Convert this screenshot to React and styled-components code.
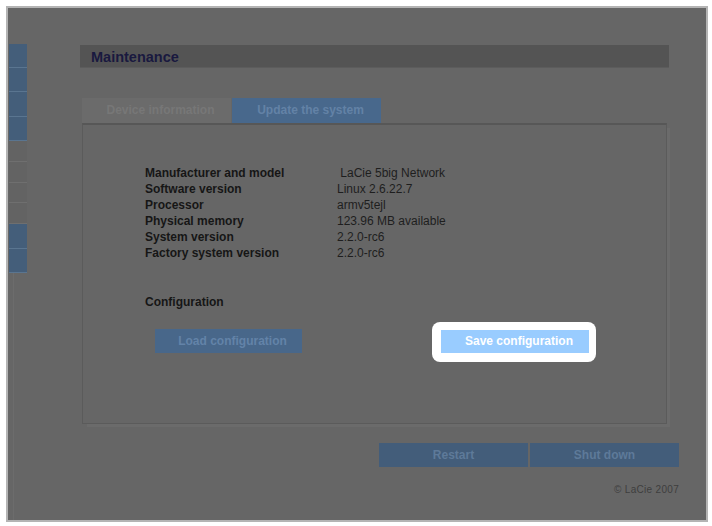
import React from 'react';
import styled, { createGlobalStyle } from 'styled-components';

const GlobalStyle = createGlobalStyle`
  body {
    margin: 0;
    background: #ffffff;
    font-family: "Liberation Sans", Arial, sans-serif;
  }
`;

const navItems = [
  { tone: 'blue', h: 24 },
  { tone: 'blue', h: 24 },
  { tone: 'blue', h: 25 },
  { tone: 'blue', h: 24 },
  { tone: 'grey', h: 21 },
  { tone: 'grey', h: 21 },
  { tone: 'grey', h: 20 },
  { tone: 'grey', h: 21 },
  { tone: 'blue', h: 25 },
  { tone: 'blue', h: 24 },
];

const info = [
  ['Manufacturer and model', '\u00a0LaCie 5big Network'],
  ['Software version', 'Linux 2.6.22.7'],
  ['Processor', 'armv5tejl'],
  ['Physical memory', '123.96 MB available'],
  ['System version', '2.2.0-rc6'],
  ['Factory system version', '2.2.0-rc6'],
];

const App = () => {
  return (
    <>
      <GlobalStyle />
      <Frame>
        <SideNav>
          {navItems.map((item, i) => (
            <NavItem key={i} $tone={item.tone} $h={item.h} />
          ))}
          <NavRail />
        </SideNav>

        <Main>
          <Header>Maintenance</Header>

          <Tabs>
            <Tab>Device information</Tab>
            <Tab $active>Update the system</Tab>
          </Tabs>

          <Panel>
            <InfoGrid>
              {info.map(([label, value]) => (
                <React.Fragment key={label}>
                  <Label>{label}</Label>
                  <Value>{value}</Value>
                </React.Fragment>
              ))}
            </InfoGrid>

            <SectionTitle>Configuration</SectionTitle>

            <ConfigRow>
              <LoadButton>Load configuration</LoadButton>
              <Spotlight>
                <SaveButton>Save configuration</SaveButton>
              </Spotlight>
            </ConfigRow>
          </Panel>

          <ActionRow>
            <ActionButton>Restart</ActionButton>
            <ActionButton>Shut down</ActionButton>
          </ActionRow>

          <Copyright>© LaCie 2007</Copyright>
        </Main>
      </Frame>
    </>
  );
};

const Frame = styled.div`
  margin: 6px;
  width: 702px;
  height: 516px;
  box-sizing: border-box;
  border: 2px solid #b4b4b4;
  background: #666666;
  display: flex;
  overflow: hidden;
`;

const SideNav = styled.div`
  width: 18px;
  margin-left: 1px;
  padding-top: 36px;
  display: flex;
  flex-direction: column;
`;

const NavItem = styled.div`
  height: ${(p) => p.$h - 1}px;
  border-bottom: 1px solid ${(p) => (p.$tone === 'blue' ? '#5a7590' : '#6f6f6f')};
  background: ${(p) => (p.$tone === 'blue' ? '#445e7a' : '#636363')};
`;

const NavRail = styled.div`
  flex: 1;
  margin-left: 4px;
  border-left: 1px solid #6c6c6c;
`;

const Main = styled.div`
  width: 599px;
  margin-left: 53px;
  padding-top: 37px;
  display: flex;
  flex-direction: column;
`;

const Header = styled.div`
  width: 589px;
  height: 23px;
  box-sizing: border-box;
  padding-left: 11px;
  background: #545454;
  border-bottom: 1px solid #5c5c5c;
  color: #19193f;
  font-size: 14.5px;
  font-weight: bold;
  line-height: 24px;
`;

const Tabs = styled.div`
  display: flex;
  gap: 1px;
  margin-top: 30px;
  margin-left: 2px;
`;

const Tab = styled.div`
  width: 149px;
  height: 25px;
  box-sizing: border-box;
  padding-left: 8px;
  text-align: center;
  line-height: 25px;
  font-size: 12px;
  font-weight: bold;
  background: ${(p) => (p.$active ? '#48688c' : '#6b6b6b')};
  color: ${(p) => (p.$active ? '#6382a6' : '#777777')};
`;

const Panel = styled.div`
  width: 585px;
  height: 301px;
  margin-left: 2px;
  box-sizing: border-box;
  border: 1px solid #5b5b5b;
  border-top: 2px solid #575757;
  padding: 40px 0 0 62px;
  box-shadow: 4px 4px 0 -1px #6b6b6b;
`;

const InfoGrid = styled.div`
  display: grid;
  grid-template-columns: 192px auto;
  font-size: 12px;
  line-height: 16px;
`;

const Label = styled.div`
  font-weight: bold;
  color: #161616;
`;

const Value = styled.div`
  color: #1e1e1e;
`;

const SectionTitle = styled.div`
  margin-top: 33px;
  font-size: 12px;
  line-height: 16px;
  font-weight: bold;
  color: #161616;
`;

const ConfigRow = styled.div`
  display: flex;
  align-items: center;
  margin-top: 19px;
`;

const LoadButton = styled.div`
  width: 147px;
  height: 24px;
  margin-left: 10px;
  box-sizing: border-box;
  padding-left: 8px;
  text-align: center;
  line-height: 24px;
  font-size: 12px;
  font-weight: bold;
  background: #48678a;
  color: #6383a8;
`;

const Spotlight = styled.div`
  margin: -8px 0 -9px 130px;
  padding: 8px 7px 9px 9px;
  background: #ffffff;
  border-radius: 8px;
`;

const SaveButton = styled.div`
  width: 148px;
  height: 23px;
  box-sizing: border-box;
  padding-left: 8px;
  text-align: center;
  line-height: 23px;
  font-size: 12px;
  font-weight: bold;
  background: #99ccff;
  color: #ffffff;
`;

const ActionRow = styled.div`
  display: flex;
  justify-content: flex-end;
  gap: 2px;
  margin-top: 19px;
`;

const ActionButton = styled.div`
  width: 149px;
  height: 24px;
  text-align: center;
  line-height: 24px;
  font-size: 12px;
  font-weight: bold;
  background: #435d7a;
  color: #5e7a99;
`;

const Copyright = styled.div`
  margin-top: 17px;
  text-align: right;
  font-size: 10px;
  line-height: 12px;
  letter-spacing: 0.3px;
  color: #3e3e3e;
`;

export default App;
